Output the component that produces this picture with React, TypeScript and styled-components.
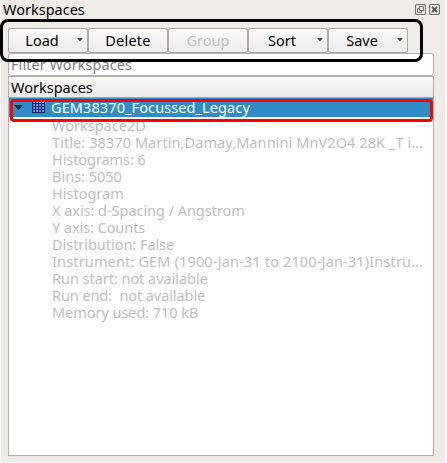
import React from "react";
import styled, { createGlobalStyle } from "styled-components";

const GlobalStyle = createGlobalStyle`
  * { box-sizing: border-box; }
  body { margin: 0; background: #fff; overflow: hidden; }
`;

const Dock = styled.main`
  position: relative;
  width: 444px;
  height: 462px;
  margin-left: 1px;
  padding: 0 11px 6px 7px;
  display: flex;
  flex-direction: column;
  background: #efebe7;
  color: #000;
  font: 14.5px/17px "Noto Sans", "Open Sans", sans-serif;
  white-space: pre;
`;

const Text = styled.span<{ $spacing?: number }>`
  display: block;
  letter-spacing: ${(p) => p.$spacing ?? 0}px;
`;

const TitleBar = styled.header`
  height: 28px;
  flex: none;
  display: flex;
  justify-content: space-between;
  margin: 0 -6px 0 -5px;
  padding-top: 1px;
`;

const TitleButtons = styled.div`
  display: flex;
  gap: 3px;
  padding-top: 3px;
`;

const Toolbar = styled.div`
  display: flex;
  height: 25px;
  flex: none;
`;

const ToolButton = styled.button`
  width: 80px;
  height: 25px;
  padding: 0;
  display: flex;
  align-items: center;
  border: 1px solid #aeaaa6;
  border-bottom-color: #a29e9a;
  border-radius: 3px;
  background: linear-gradient(#fdfcfc, #edebe9);
  color: #000;
  font: inherit;
  &:disabled { color: #c1bfbd; }
`;

const ButtonLabel = styled.span<{ $menu?: boolean; $spacing: number }>`
  flex: 1;
  text-align: center;
  padding-right: ${(p) => (p.$menu ? 8 : 0)}px;
  letter-spacing: ${(p) => p.$spacing}px;
`;

const MenuArrow = styled.svg`
  width: 6px;
  height: 4px;
  flex: none;
  margin: 0 4px 2px -6px;
`;

const FilterBox = styled.div`
  height: 23px;
  flex: none;
  border: 1px solid #b4b0ac;
  border-radius: 3px;
  background: #fff;
  padding: 2px 2px 0;
  color: #7f7f7f;
`;

const Tree = styled.section`
  flex: 1;
  border: 1px solid #b4b1ad;
  background: #fff;
`;

const TreeHeader = styled.div`
  height: 21px;
  border-bottom: 1px solid #aaa7a3;
  background: linear-gradient(#fbf9f7, #eae8e5);
  padding: 2px 2px 0;
`;

const SelectedRow = styled.div`
  height: 19px;
  display: flex;
  align-items: center;
  background: #308cc6;
  color: #fff;
`;

const Expander = styled.svg`
  width: 9px;
  height: 5px;
  margin: 0 9px 0 5px;
`;

const GridIcon = styled.svg`
  width: 13px;
  height: 11px;
  margin-right: 6px;
`;

const Details = styled.div`
  padding-left: 43px;
  color: #bebebe;
`;

const DetailRow = styled.div`
  height: 17px;
`;

const Highlight = styled.div<{ $color: string; $x: number; $y: number; $w: number; $h: number; $r: number }>`
  position: absolute;
  left: ${(p) => p.$x}px;
  top: ${(p) => p.$y}px;
  width: ${(p) => p.$w}px;
  height: ${(p) => p.$h}px;
  border: 3px solid ${(p) => p.$color};
  border-radius: ${(p) => p.$r}px;
  pointer-events: none;
`;

const buttons = [
  { label: "Load", menu: true, spacing: 0 },
  { label: "Delete", spacing: 0.25 },
  { label: "Group", disabled: true, spacing: 0 },
  { label: "Sort", menu: true, spacing: 0 },
  { label: "Save", menu: true, spacing: 0 },
];

const details: [string, number][] = [
  ["Workspace2D", 0],
  ["Title: 38370 Martin,Damay,Mannini MnV2O4 28K _T i…", 0.08],
  ["Histograms: 6", -0.08],
  ["Bins: 5050", 0],
  ["Histogram", 0],
  ["X axis: d-Spacing / Angstrom", -0.04],
  ["Y axis: Counts", -0.07],
  ["Distribution: False", -0.04],
  ["Instrument: GEM (1900-Jan-31 to 2100-Jan-31)Instru…", 0.15],
  ["Run start: not available", -0.04],
  ["Run end:  not available", -0.08],
  ["Memory used: 710 kB", -0.05],
];

export default function App() {
  return (
    <>
      <GlobalStyle />
      <Dock>
        <TitleBar>
          <Text>Workspaces</Text>
          <TitleButtons>
            <svg width="11" height="11" fill="none" stroke="#77736f">
              <rect x=".5" y=".5" width="10" height="10" rx="1.5" strokeWidth="1.2" />
              <path d="M4.5 2.5h4v4h-4zM4 4.5H2.5v4h4V7" />
            </svg>
            <svg width="11" height="11" fill="none" stroke="#77736f">
              <rect x=".5" y=".5" width="10" height="10" rx="1.5" strokeWidth="1.2" />
              <path d="M3 3l5 5M8 3L3 8" stroke="#5a5652" strokeWidth="2" />
            </svg>
          </TitleButtons>
        </TitleBar>
        <Toolbar>
          {buttons.map((b) => (
            <ToolButton key={b.label} disabled={b.disabled}>
              <ButtonLabel $menu={b.menu} $spacing={b.spacing}>{b.label}</ButtonLabel>
              {b.menu && (
                <MenuArrow viewBox="0 0 6 4"><path d="M0 0h6L3 3.5z" fill="#4a4846" /></MenuArrow>
              )}
            </ToolButton>
          ))}
        </Toolbar>
        <FilterBox><Text $spacing={0.06}>Filter Workspaces</Text></FilterBox>
        <Tree>
          <TreeHeader><Text>Workspaces</Text></TreeHeader>
          <SelectedRow>
            <Expander viewBox="0 0 9 5"><path d="M0 0h9L4.5 5z" fill="#10293a" /></Expander>
            <GridIcon viewBox="0 0 13 11">
              <path d="M0 0h13v11H0z" fill="#7088e8" />
              <path d="M.5 0v11M3.5 0v11M6.5 0v11M9.5 0v11M12.5 0v11M0 1.5h13M0 4.5h13M0 7.5h13M0 10.5h13" stroke="#1c2c58" />
            </GridIcon>
            <Text $spacing={0.1}>GEM38370_Focussed_Legacy</Text>
          </SelectedRow>
          <Details>
            {details.map(([text, spacing]) => (
              <DetailRow key={text}><Text $spacing={spacing}>{text}</Text></DetailRow>
            ))}
          </Details>
        </Tree>
        <Highlight $color="#000" $x={-1} $y={19} $w={423} $h={43} $r={8} />
        <Highlight $color="#f00" $x={9} $y={99} $w={423} $h={23} $r={4} />
      </Dock>
    </>
  );
}
